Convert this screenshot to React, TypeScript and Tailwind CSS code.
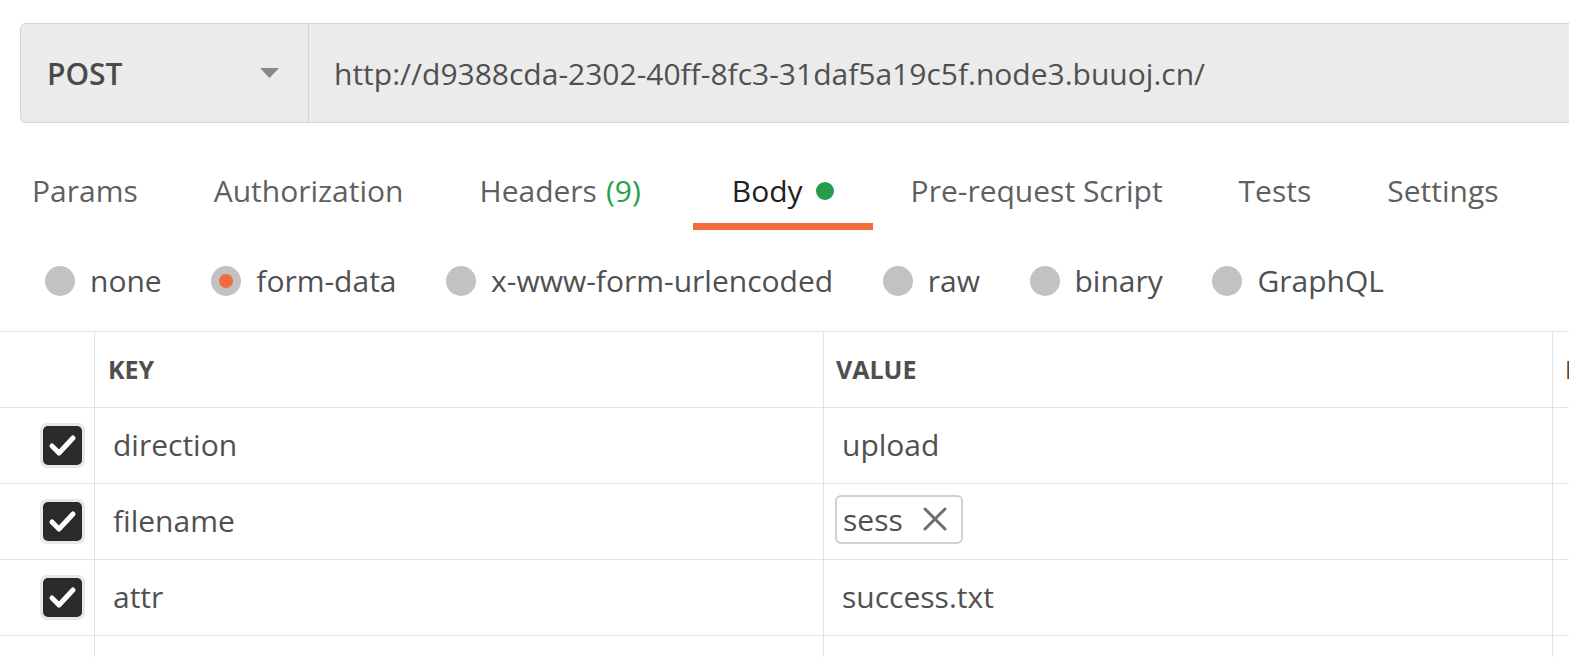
import React from 'react';

const tabs = [
  { label: 'Params' },
  { label: 'Authorization' },
  { label: 'Headers', count: '(9)' },
  { label: 'Body', active: true },
  { label: 'Pre-request Script' },
  { label: 'Tests' },
  { label: 'Settings' },
];

const bodyTypes = ['none', 'form-data', 'x-www-form-urlencoded', 'raw', 'binary', 'GraphQL'];

const rows = [
  { key: 'direction', value: 'upload' },
  { key: 'filename', value: 'sess', chip: true },
  { key: 'attr', value: 'success.txt' },
];

function CheckBox() {
  return (
    <div className="w-[45px] h-[45px] rounded-[7px] bg-[#e8e8e8] p-[3px]">
      <div className="w-full h-full rounded-[5px] bg-[#2a2a2a] flex items-center justify-center">
        <svg width="39" height="39" viewBox="0 0 39 39">
          <path d="M9 20 L16 27 L30 12" fill="none" stroke="#fff" strokeWidth="5" strokeLinecap="round" strokeLinejoin="round" />
        </svg>
      </div>
    </div>
  );
}

export default function App() {
  return (
    <div className="w-[1569px] h-[657px] bg-white overflow-hidden font-['Open_Sans',sans-serif] text-[#505050]">
      {/* URL BAR */}
      <div className="pt-[23px] pl-[20px]">
        <div className="flex h-[100px] rounded-l-[6px] border border-r-0 border-[#d4d4d4] bg-[#ebebeb]">
          <div className="w-[288px] shrink-0 flex items-center justify-between pl-[26px] pr-[29px] border-r border-[#d4d4d4]">
            <span className="text-[30px] font-semibold text-[#4a4a4a]">POST</span>
            <svg width="19" height="10" viewBox="0 0 19 10">
              <path d="M0 0 H19 L9.5 10 Z" fill="#888" />
            </svg>
          </div>
          <div className="flex items-center pl-[25px] text-[30px] whitespace-nowrap">
            http://d9388cda-2302-40ff-8fc3-31daf5a19c5f.node3.buuoj.cn/
          </div>
        </div>
      </div>

      {/* TABS */}
      <div className="flex ml-[-6px] mt-[48px] text-[30px] whitespace-nowrap">
        {tabs.map((t) => (
          <div
            key={t.label}
            className={
              t.active
                ? 'ml-[14px] px-[39px] pb-[12px] border-b-[7px] border-[#f26b3a] flex items-center gap-[13px] text-[#212121] leading-[40px]'
                : 'px-[38px] pb-[19px] flex items-center gap-[9px] text-[#5f5f5f] leading-[40px]'
            }
          >
            <span>{t.label}</span>
            {t.count && <span className="text-[#26a04a]">{t.count}</span>}
            {t.active && <span className="w-[18px] h-[18px] rounded-full bg-[#249c48]" />}
          </div>
        ))}
      </div>

      {/* BODY TYPES */}
      <div className="h-[101px] flex items-center gap-[49.6px] pl-[45px] text-[30px] whitespace-nowrap">
        {bodyTypes.map((b) => (
          <div key={b} className="flex items-center gap-[15px]">
            <span className="w-[30px] h-[30px] rounded-full bg-[#c2c2c2] flex items-center justify-center">
              {b === 'form-data' && <span className="w-[14px] h-[14px] rounded-full bg-[#f26b3a]" />}
            </span>
            <span>{b}</span>
          </div>
        ))}
      </div>

      {/* TABLE */}
      <div className="border-t border-[#e3e3e3]">
        <div className="grid grid-cols-[95px_729px_729px_1fr] h-[76px] border-b border-[#e3e3e3] text-[25px] font-bold text-[#4f4f4f] whitespace-nowrap">
          <div className="border-r border-[#e3e3e3]" />
          <div className="flex items-center pl-[13px] border-r border-[#e3e3e3]">KEY</div>
          <div className="flex items-center pl-[12px] border-r border-[#e3e3e3]">VALUE</div>
          <div className="flex items-center pl-[12px] overflow-hidden">DESCRIPTION</div>
        </div>
        {rows.map((r) => (
          <div key={r.key} className="grid grid-cols-[95px_729px_729px_1fr] h-[76px] border-b border-[#e3e3e3] text-[30px] whitespace-nowrap">
            <div className="flex items-center justify-end pr-[9px] border-r border-[#e3e3e3]">
              <CheckBox />
            </div>
            <div className="flex items-center pl-[18px] pb-[3px] border-r border-[#e3e3e3]">{r.key}</div>
            <div className="flex items-center pl-[11px] pb-[3px] border-r border-[#e3e3e3]">
              {r.chip ? (
                <div className="mt-[-2px] h-[49px] flex items-center gap-[20px] pl-[6px] pr-[14px] border-2 border-[#d0d0d0] rounded-[6px]">
                  <span>{r.value}</span>
                  <svg width="24" height="24" viewBox="0 0 24 24">
                    <path d="M2 2 L22 22 M22 2 L2 22" stroke="#6f6f6f" strokeWidth="3" strokeLinecap="round" />
                  </svg>
                </div>
              ) : (
                <span className="pl-[7px]">{r.value}</span>
              )}
            </div>
            <div />
          </div>
        ))}
        <div className="grid grid-cols-[95px_729px_729px_1fr] h-[76px]">
          <div className="border-r border-[#e3e3e3]" />
          <div className="border-r border-[#e3e3e3]" />
          <div className="border-r border-[#e3e3e3]" />
          <div />
        </div>
      </div>
    </div>
  );
}
